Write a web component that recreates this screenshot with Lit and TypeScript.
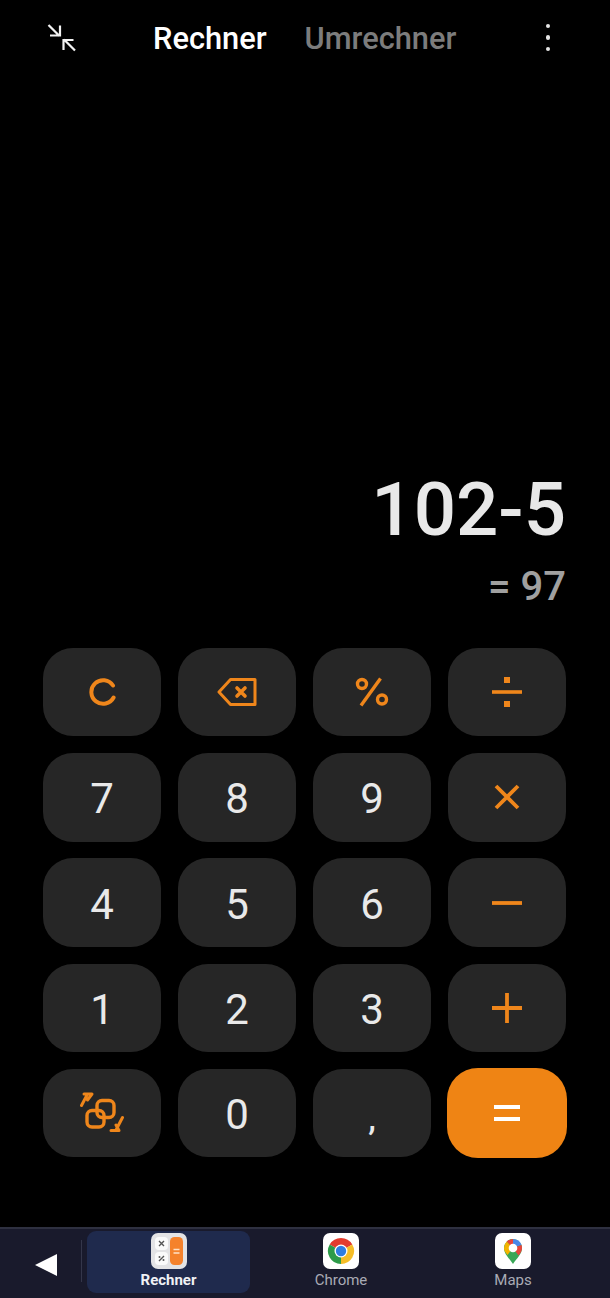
import { LitElement, html, css, svg } from "lit";
import { customElement } from "lit/decorators.js";

const ic = (w: number, h: number, body: unknown) => html`<svg class="ic" width=${w} height=${h} viewBox="0 0 ${w} ${h}" fill="none" stroke="#ef861b" stroke-linecap="round" stroke-linejoin="round">${body}</svg>`;

const icons: Record<string, unknown> = {
  c: ic(28, 30, svg`<path d="M25 8.500A11.800 11.800 0 1 0 25.600 20.500" stroke-width="4"/>`),
  back: ic(40, 30, svg`<path d="M13.500 2.500h24.500v25H13.500L2 15z" stroke-width="3"/><path d="M20 11l8 8M28 11l-8 8" stroke-width="3.600"/>`),
  pct: ic(34, 30, svg`<circle cx="7" cy="7" r="4.500" stroke-width="3.400"/><circle cx="27" cy="22.500" r="4.500" stroke-width="3.400"/><path d="M25.500 1.500L6 28.500" stroke-linecap="butt" stroke-width="3.400"/>`),
  div: ic(32, 34, svg`<path d="M1 17h30" stroke-linecap="butt" stroke-width="3.600"/><rect x="13" y="2" width="6" height="6" fill="#ef861b" stroke="none"/><rect x="13" y="26" width="6" height="6" fill="#ef861b" stroke="none"/>`),
  mul: ic(26, 26, svg`<path d="M2 2l22 22M24 2L2 24" stroke-width="3.800" stroke-linecap="butt"/>`),
  min: ic(30, 4, svg`<path d="M0 2h30" stroke-width="3.800" stroke-linecap="butt"/>`),
  plus: ic(30, 30, svg`<path d="M0 15h30M15 0v30" stroke-width="3.800" stroke-linecap="butt"/>`),
  conv: ic(44, 42, svg`
    <rect x="7" y="18.500" width="17" height="16.500" rx="5" stroke-width="3.400"/>
    <rect x="17" y="8.500" width="17" height="17" rx="5" stroke-width="3.400"/>
    <path d="M1.500 13.500L7 3M4 2H12L7.500 8" stroke-width="3"/>
    <path d="M42.500 25.500L36 38M31 38.500H39L36 33" stroke-width="3"/>`),
};

type Key = { t?: string; i?: string; eq?: boolean };
const keys: Key[] = [
  { i: "c" }, { i: "back" }, { i: "pct" }, { i: "div" },
  { t: "7" }, { t: "8" }, { t: "9" }, { i: "mul" },
  { t: "4" }, { t: "5" }, { t: "6" }, { i: "min" },
  { t: "1" }, { t: "2" }, { t: "3" }, { i: "plus" },
  { i: "conv" }, { t: "0" }, { t: "," }, { eq: true },
];

@customElement("app-root")
export class AppRoot extends LitElement {
  static styles = css`
    :host { display: flex; flex-direction: column; width: 610px; height: 1298px; background: #000; font-family: Roboto, "Noto Sans", sans-serif; overflow: hidden; }
    .top { height: 76px; flex: none; display: flex; align-items: center; padding: 0 48px; box-sizing: border-box; }
    .tabs { display: flex; gap: 38px; margin-left: 76px; font-size: 30.800px; font-weight: 500; }
    .tab-on { color: #fff; }
    .tab-off { color: #7c7c7c; }
    .more { margin-left: auto; display: flex; flex-direction: column; gap: 7px; margin-right: 12px; margin-top: -1px; }
    .more i { width: 4.500px; height: 4.500px; border-radius: 50%; background: #e6e6e6; display: block; }
    .shrink { flex: none; width: 29px; height: 29px; margin-top: -1px; margin-left: -1px; margin-right: 1px; }
    .screen { flex: 1; display: flex; flex-direction: column; justify-content: flex-end; align-items: flex-end; padding: 0 44px 38px 0; min-height: 0; }
    .expr { font-size: 74.500px; line-height: 88px; font-weight: 500; color: #e8e8e8; }
    .res { font-size: 40px; line-height: 47px; font-weight: 500; color: #a0a0a0; margin-top: 9px; }
    .pad { display: grid; grid-template-columns: repeat(4, 118px); grid-auto-rows: 88.400px; gap: 16.800px 17px; padding-left: 43px; flex: none; }
    .key { background: #262626; border-radius: 30px; display: flex; align-items: center; justify-content: center; color: #e9e9e9; font-size: 42px; font-weight: 400; }
    .digit { padding-top: 3px; }
    .key.eq { background: #ef8414; box-shadow: 0 0 0 1px #ef8414; }
    .eqbars { display: flex; flex-direction: column; gap: 8px; }
    .eqbars i { display: block; width: 26px; height: 4px; background: #fff; }
    .comma { font-size: 34px; padding-top: 9px; font-weight: 500; }
    .bar { flex: none; margin-top: 69.800px; height: 71px; box-sizing: border-box; background: #191a2c; border-top: 2px solid #2e3040; display: flex; align-items: stretch; padding: 2px 0 5px 0; }
    .backbtn { width: 82px; flex: none; display: flex; align-items: center; justify-content: center; border-right: 1px solid #34364a; margin-top: 9px; box-sizing: border-box; height: 42px; padding-left: 11px; padding-right: 1px; padding-top: 8px; }
    .app { display: flex; flex-direction: column; align-items: center; font-size: 15px; line-height: 17px; color: #a9abb5; padding-top: 2px; box-sizing: border-box; }
    .app.on { width: 163px; margin-left: 5px; background: #1f2a4d; border-radius: 9px; color: #f0f1f5; font-weight: 700; }
    .app.ch { width: 182px; }
    .app.mp { width: 162px; }
    .app svg { display: block; margin-bottom: 3px; }
  `;

  render() {
    return html`
      <div class="top">
        <svg class="shrink" viewBox="0 0 29 29" fill="none" stroke="#f2f2f2" stroke-width="2.200">
          <path d="M1.500 2l11 11M3 12.500h10V2.500"/>
          <path d="M28 27.500l-11-11M26.500 17h-10v10"/>
        </svg>
        <div class="tabs"><span class="tab-on">Rechner</span><span class="tab-off">Umrechner</span></div>
        <div class="more"><i></i><i></i><i></i></div>
      </div>
      <div class="screen">
        <div class="expr">102-5</div>
        <div class="res">= 97</div>
      </div>
      <div class="pad">
        ${keys.map((k) => k.eq
          ? html`<div class="key eq"><div class="eqbars"><i></i><i></i></div></div>`
          : k.i ? html`<div class="key">${icons[k.i]}</div>`
          : html`<div class="key ${k.t === "," ? "comma" : "digit"}">${k.t}</div>`)}
      </div>
      <div class="bar">
        <div class="backbtn"><svg width="22" height="22" viewBox="0 0 22 22"><path d="M22 0v22L0 11z" fill="#fff"/></svg></div>
        <div class="app on">
          <svg width="36" height="36" viewBox="0 0 36 36">
            <rect width="36" height="36" rx="7" fill="#e3e3e5"/>
            <rect x="4" y="4" width="13" height="13" rx="4" fill="#fafafa"/>
            <rect x="4" y="19" width="13" height="13" rx="4" fill="#fafafa"/>
            <rect x="19" y="4" width="13" height="28" rx="4.500" fill="#f5822c"/>
            <path d="M8 8l5 5M13 8l-5 5M8 28l5-5" stroke="#555" stroke-width="1.400" fill="none"/>
            <circle cx="8.500" cy="24" r="1" fill="#555"/><circle cx="12.500" cy="27" r="1" fill="#555"/>
            <path d="M22.500 16.500h6M22.500 20h6" stroke="#ffe2c8" stroke-width="1.500"/>
          </svg>
          Rechner
        </div>
        <div class="app ch">
          <svg width="36" height="36" viewBox="0 0 36 36">
            <rect width="36" height="36" rx="7" fill="#fff"/>
            <path d="M18 18L6.700 11.500A13 13 0 0 1 29.300 11.500z" fill="#e33b2e"/>
            <path d="M18 18L29.300 11.500A13 13 0 0 1 18 31z" fill="#f5bd27"/>
            <path d="M18 18L18 31A13 13 0 0 1 6.700 11.500z" fill="#2d9b49"/>
            <circle cx="18" cy="18" r="6.500" fill="#fff"/>
            <circle cx="18" cy="18" r="5.200" fill="#2f7de1"/>
          </svg>
          Chrome
        </div>
        <div class="app mp">
          <svg width="36" height="36" viewBox="0 0 36 36">
            <rect width="36" height="36" rx="7" fill="#fff"/>
            <path d="M18 31C14 25 9 21 9 15a9 9 0 0 1 18 0C27 21 22 25 18 31z" fill="#3aa757"/>
            <path d="M9 15a9 9 0 0 1 2.800-6.500L18 15 12.500 22C10.500 19.500 9 18 9 15z" fill="#f4b400"/>
            <path d="M11.800 8.500A9 9 0 0 1 18 6V15z" fill="#e8453c"/>
            <path d="M18 6A9 9 0 0 1 26.500 12L18 15z" fill="#4a86e8"/>
            <path d="M26.500 12a9 9 0 0 1 .5 3c0 3-1.500 5-3.500 7.500L18 15z" fill="#e8453c"/>
            <circle cx="18" cy="15" r="4.300" fill="#fff"/>
          </svg>
          Maps
        </div>
      </div>
    `;
  }
}
